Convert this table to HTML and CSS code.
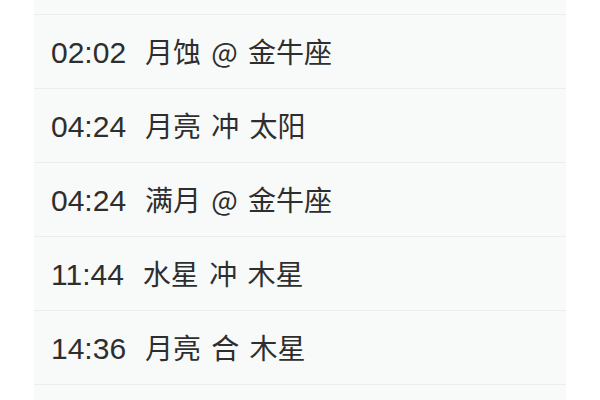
FILE: index.html
```html
<!DOCTYPE html>
<html lang="zh">
<head>
<meta charset="utf-8">
<link rel="stylesheet" href="styles.css">
</head>
<body>
<div class="page">
  <ul class="list">
    <li class="row row-partial"></li>
    <li class="row"><span class="time">02:02</span><span class="event">月蚀 @ 金牛座</span></li>
    <li class="row"><span class="time">04:24</span><span class="event">月亮 冲 太阳</span></li>
    <li class="row"><span class="time">04:24</span><span class="event">满月 @ 金牛座</span></li>
    <li class="row"><span class="time">11:44</span><span class="event">水星 冲 木星</span></li>
    <li class="row"><span class="time">14:36</span><span class="event">月亮 合 木星</span></li>
    <li class="row"></li>
  </ul>
</div>
</body>
</html>
```

FILE: styles.css
```css
html, body {
  margin: 0;
  padding: 0;
  background: #ffffff;
}
.page {
  padding: 0 34px;
  height: 400px;
  overflow: hidden;
}
.list {
  list-style: none;
  margin: 0;
  padding: 0;
  background: #f8f9f9;
}
.row {
  display: flex;
  align-items: baseline;
  height: 73px;
  line-height: 73px;
  border-bottom: 1px solid #eceded;
  padding-left: 17px;
  color: #2e2e2e;
  white-space: pre;
}
.row-partial {
  height: 14px;
}
.time {
  font-family: "Liberation Sans", sans-serif;
  font-size: 30px;
  margin-right: 19px;
}
.event {
  font-family: "Noto Sans CJK SC", sans-serif;
  font-size: 28px;
  word-spacing: 4px;
}
```
